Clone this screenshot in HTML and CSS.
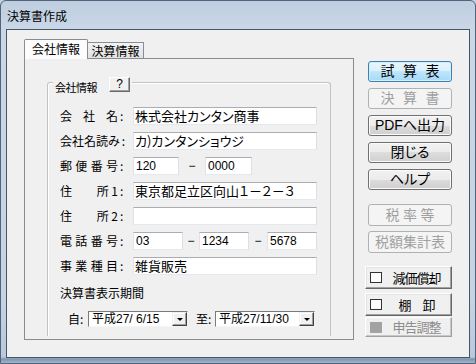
FILE: index.html
```html
<!DOCTYPE html>
<html lang="ja">
<head>
<meta charset="utf-8">
<title>決算書作成</title>
<link rel="stylesheet" href="styles.css">
</head>
<body>
<div class="window">
  <div class="titlebar">決算書作成</div>
  <div class="client">
    <div class="tabctl">
      <div class="tabs">
        <div class="tab active">会社情報</div>
        <div class="tab">決算情報</div>
      </div>
      <div class="panel">
        <div class="group">
          <div class="legend"><span class="legend-text">会社情報</span><span class="qbtn">?</span></div>
          <div class="form">
            <div class="row">
              <span class="lab"><span class="sp"><span>会</span><span>社</span><span>名</span></span><span class="colon">:</span></span>
              <span class="tb full">株式会社カンタン商事</span>
            </div>
            <div class="row">
              <span class="lab"><span class="sp"><span>会社名読み</span></span><span class="colon">:</span></span>
              <span class="tb full">カ)カンタンショウジ</span>
            </div>
            <div class="row">
              <span class="lab"><span class="sp"><span>郵</span><span>便</span><span>番</span><span>号</span></span><span class="colon">:</span></span>
              <span class="tb num zip1">120</span>
              <span class="dash zipdash">−</span>
              <span class="tb num zip2">0000</span>
            </div>
            <div class="row">
              <span class="lab"><span class="sp"><span>住</span><span>所&nbsp;1</span></span><span class="colon">:</span></span>
              <span class="tb full">東京都足立区向山１－２－３</span>
            </div>
            <div class="row">
              <span class="lab"><span class="sp"><span>住</span><span>所&nbsp;2</span></span><span class="colon">:</span></span>
              <span class="tb full"></span>
            </div>
            <div class="row">
              <span class="lab"><span class="sp"><span>電</span><span>話</span><span>番</span><span>号</span></span><span class="colon">:</span></span>
              <span class="tb num tel">03</span>
              <span class="dash teldash1">−</span>
              <span class="tb num tel">1234</span>
              <span class="dash teldash2">−</span>
              <span class="tb num tel">5678</span>
            </div>
            <div class="row">
              <span class="lab"><span class="sp"><span>事</span><span>業</span><span>種</span><span>目</span></span><span class="colon">:</span></span>
              <span class="tb full">雑貨販売</span>
            </div>
          </div>
          <div class="period-title">決算書表示期間</div>
          <div class="period">
            <span class="plab">自:</span>
            <span class="combo"><span class="combo-text">平成27/ 6/15</span><span class="drop"></span></span>
            <span class="plab to">至:</span>
            <span class="combo"><span class="combo-text">平成27/11/30</span><span class="drop"></span></span>
          </div>
        </div>
      </div>
    </div>
    <div class="side">
      <div class="bgroup g1">
        <div class="btn default"><span class="spaced">試算表</span></div>
        <div class="btn disabled"><span class="spaced">決算書</span></div>
        <div class="btn">PDFへ出力</div>
        <div class="btn">閉じる</div>
        <div class="btn">ヘルプ</div>
      </div>
      <div class="bgroup g2">
        <div class="btn disabled"><span class="spaced-s">税率等</span></div>
        <div class="btn disabled">税額集計表</div>
      </div>
      <div class="bgroup g3">
        <div class="cbtn"><span class="cb"></span><span class="cbtext">減価償却</span></div>
        <div class="cbtn second"><span class="cb"></span><span class="cbtext">棚　卸</span></div>
        <div class="cbtn third disabled"><span class="cb"></span><span class="cbtext">申告調整</span></div>
      </div>
    </div>
  </div>
</div>
</body>
</html>
```

FILE: styles.css
```css
* { box-sizing: border-box; margin: 0; padding: 0; }
html, body { width: 476px; height: 364px; overflow: hidden; }
body {
  font-family: "Noto Sans CJK JP", "Noto Sans", sans-serif;
  font-size: 12px;
  color: #000;
  background: #c3d2e2;
  font-feature-settings: "palt" 1;
}
.window {
  width: 476px;
  height: 364px;
  display: flex;
  flex-direction: column;
  padding: 0 5px 5px 5px;
  border: 1px solid #52637a;
  border-radius: 6px 6px 0 0;
  background: linear-gradient(180deg, #bfcee0 0px, #c9d7e7 28px, #c5d3e3 300px, #b9c9da 356px, #7e95af 358px, #a2b4c8 362px, #a2b4c8 364px);
}
.titlebar {
  height: 28px;
  padding: 6px 0 0 1px;
  line-height: 17px;
  font-size: 12px;
  color: #000;
}
.client {
  height: 329px;
  border: 1px solid #465669;
  background: #f0f0f0;
  display: flex;
  align-items: flex-start;
}

/* tab control */
.tabctl { margin: 9px 0 0 17px; width: 330px; }
.tabs { display: flex; align-items: flex-end; height: 19px; }
.tab {
  height: 16px;
  width: 57px;
  margin-left: -1px;
  border: 1px solid #898c95;
  border-bottom: none;
  background: linear-gradient(#f2f2f2, #e1e1e1);
  line-height: 15px;
  text-align: center;
  font-size: 12px;
}
.tab.active {
  height: 20px;
  width: 64px;
  margin-left: 0;
  margin-bottom: -1px;
  position: relative;
  z-index: 1;
  background: #fcfcfc;
  line-height: 18px;
  border-radius: 2px 2px 0 0;
}
.panel {
  height: 282px;
  border: 1px solid #898c95;
  background: #f0f0f0;
}

/* group box */
.group {
  margin: 23px 0 0 22px;
  width: 284px;
  height: 254px;
  border: 1px solid #c3c3c3;
  border-bottom: none;
  border-radius: 3px 3px 0 0;
  box-shadow: inset 1px 1px #fff;
}
.legend {
  display: flex;
  align-items: flex-start;
  width: fit-content;
  height: 18px;
  margin: -6px 0 0 5px;
  padding: 0 2px;
  background: #f0f0f0;
}
.legend-text { font-size: 11px; letter-spacing: -0.5px; line-height: 15px; margin-top: 3px; }
.qbtn {
  margin-left: 12px;
  width: 21px;
  height: 15px;
  border: 1px solid;
  border-color: #fff #696969 #696969 #fff;
  box-shadow: inset -1px -1px #a0a0a0;
  background: #f0f0f0;
  font-family: "Liberation Sans", sans-serif;
  font-size: 12px;
  line-height: 13px;
  text-align: center;
}

/* form rows */
.form { margin: 12px 0 0 12px; display: flex; flex-direction: column; gap: 7px; }
.row { display: flex; align-items: center; height: 18px; }
.lab { display: flex; width: 73px; font-size: 12px; line-height: 16px; }
.sp { display: flex; justify-content: space-between; min-width: 58px; }
.colon { margin-left: 2px; }
.tb {
  height: 18px;
  background: #fff;
  border: 1px solid;
  border-color: #abadb3 #dbdfe6 #e3e9ef #e2e3ea;
  padding-left: 1px;
  font-size: 13px;
  line-height: 16px;
  white-space: nowrap;
  overflow: hidden;
}
.full { width: 184px; }
.num { font-family: "Liberation Sans", sans-serif; font-size: 12px; padding-left: 2px; }
.zip1 { width: 46px; }
.zip2 { width: 47px; }
.tel { width: 50px; }
.dash { font-family: "Liberation Sans", sans-serif; font-size: 12px; text-align: center; }
.zipdash { width: 26px; }
.teldash1 { width: 16px; }
.teldash2 { width: 18px; }

/* period */
.period-title { margin: 10px 0 0 12px; line-height: 16px; font-size: 12px; }
.period { display: flex; align-items: center; height: 16px; margin: 10px 0 0 20px; }
.plab { width: 20px; font-size: 12px; line-height: 16px; }
.plab.to { width: 19px; margin-left: 8px; }
.combo {
  display: flex;
  width: 100px;
  height: 16px;
  background: #fff;
  border: 1px solid;
  border-color: #7a7a7a #f4f4f4 #f4f4f4 #7a7a7a;
}
.combo-text {
  flex: 1;
  padding-left: 3px;
  font-family: "Liberation Sans", "Noto Sans CJK JP", sans-serif;
  font-size: 12px;
  line-height: 14px;
  white-space: pre;
}
.drop {
  width: 15px;
  height: 14px;
  display: flex;
  align-items: center;
  justify-content: center;
  background: #f0f0f0;
  border: 1px solid;
  border-color: #f0f0f0 #404040 #404040 #f0f0f0;
  box-shadow: inset -1px -1px #a0a0a0, inset 1px 1px #fff;
}
.drop::after {
  content: "";
  border-left: 3px solid transparent;
  border-right: 3px solid transparent;
  border-top: 3px solid #000;
  margin-top: 1px;
}

/* side buttons */
.side { margin: 31px 0 0 11px; width: 87px; display: flex; flex-direction: column; }
.bgroup { display: flex; flex-direction: column; align-items: flex-end; gap: 6px; }
.btn {
  width: 84px;
  height: 21px;
  border: 1px solid #707070;
  border-radius: 3px;
  background: linear-gradient(#f2f2f2 0%, #ebebeb 50%, #dddddd 50%, #cfcfcf 100%);
  box-shadow: inset 0 0 0 1px #fbfbfb;
  font-family: "Liberation Sans", "Noto Sans CJK JP", sans-serif;
  font-size: 14px;
  line-height: 19px;
  text-align: center;
  white-space: nowrap;
}
.btn.default {
  border-color: #3c7fb1;
  background: linear-gradient(#eaf6fd 0%, #d9f0fc 50%, #bee6fd 50%, #a7d9f5 100%);
  box-shadow: inset 0 0 0 1px #d2edfb;
}
.btn.disabled {
  border-color: #adb2b5;
  background: #f4f4f4;
  color: #a0a0a0;
  box-shadow: none;
}
.spaced { letter-spacing: 8.5px; margin-right: -8.5px; }
.spaced-s { letter-spacing: 3.5px; margin-right: -3.5px; }
.g2 { margin-top: 14px; gap: 5px; }
.g2 .btn { height: 22px; line-height: 20px; }
.g3 { margin-top: 13px; gap: 0; align-items: stretch; }
.cbtn {
  display: flex;
  align-items: center;
  height: 23px;
  padding-left: 4px;
  background: #f0f0f0;
  border: 1px solid;
  border-color: #fff #696969 #696969 #fff;
  box-shadow: inset -1px -1px #a0a0a0, inset 1px 1px #e3e3e3;
  font-size: 13px;
}
.cbtn.second { margin-top: 4px; }
.cbtn.third { margin-top: 1px; height: 20px; }
.cb {
  width: 12px;
  height: 11px;
  background: #fff;
  border: 1px solid #333;
}
.cbtext { flex: 1; text-align: center; line-height: 16px; letter-spacing: -1px; }
.cbtn.disabled { color: #8d8d8d; border-color: #fff #a0a0a0 #a0a0a0 #fff; box-shadow: inset -1px -1px #c8c8c8; }
.cbtn.disabled .cb { background: #a3a3a3; border-color: #a3a3a3; }
```
